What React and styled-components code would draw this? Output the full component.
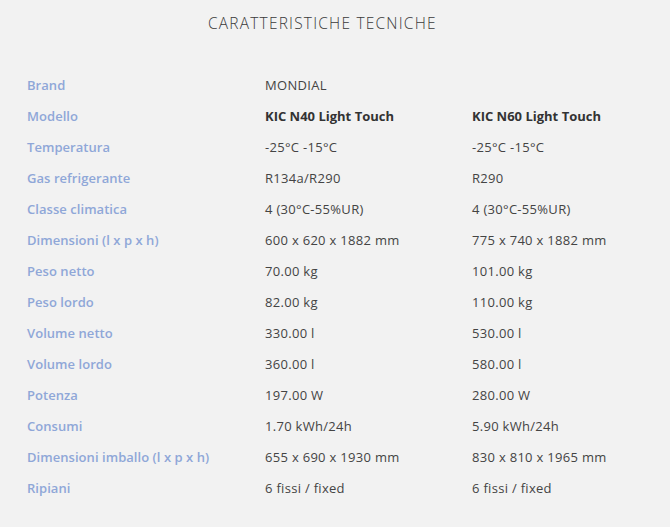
import React from "react";
import styled, { createGlobalStyle } from "styled-components";

const GlobalStyle = createGlobalStyle`
  html, body {
    margin: 0;
    padding: 0;
    background: #f2f2f2;
  }
  body {
    font-family: "Open Sans", "Liberation Sans", sans-serif;
  }
`;

const specs = [
  { label: "Brand", a: "MONDIAL", b: "" },
  { label: "Modello", a: "KIC N40 Light Touch", b: "KIC N60 Light Touch", bold: true },
  { label: "Temperatura", a: "-25°C -15°C", b: "-25°C -15°C" },
  { label: "Gas refrigerante", a: "R134a/R290", b: "R290" },
  { label: "Classe climatica", a: "4 (30°C-55%UR)", b: "4 (30°C-55%UR)" },
  { label: "Dimensioni (l x p x h)", a: "600 x 620 x 1882 mm", b: "775 x 740 x 1882 mm" },
  { label: "Peso netto", a: "70.00 kg", b: "101.00 kg" },
  { label: "Peso lordo", a: "82.00 kg", b: "110.00 kg" },
  { label: "Volume netto", a: "330.00 l", b: "530.00 l" },
  { label: "Volume lordo", a: "360.00 l", b: "580.00 l" },
  { label: "Potenza", a: "197.00 W", b: "280.00 W" },
  { label: "Consumi", a: "1.70 kWh/24h", b: "5.90 kWh/24h" },
  { label: "Dimensioni imballo (l x p x h)", a: "655 x 690 x 1930 mm", b: "830 x 810 x 1965 mm" },
  { label: "Ripiani", a: "6 fissi / fixed", b: "6 fissi / fixed" },
];

export default function App() {
  return (
    <Page>
      <GlobalStyle />
      <Title>CARATTERISTICHE TECNICHE</Title>
      <SpecTable>
        {specs.map((s) => (
          <Row key={s.label}>
            <Label>{s.label}</Label>
            <Value $bold={s.bold}>{s.a}</Value>
            <Value $bold={s.bold}>{s.b}</Value>
          </Row>
        ))}
      </SpecTable>
    </Page>
  );
}

const Page = styled.div`
  width: 670px;
  height: 527px;
  box-sizing: border-box;
`;

const Title = styled.h2`
  margin: 0;
  padding-top: 13px;
  height: 20px;
  line-height: 20px;
  padding-left: 208px;
  font-size: 15.5px;
  font-weight: 300;
  color: #3a3a3a;
  letter-spacing: 1.2px;
`;

const SpecTable = styled.div`
  margin-top: 36px;
  padding-left: 27px;
`;

const Row = styled.div`
  display: grid;
  grid-template-columns: 238px 207px 1fr;
  height: 31px;
  align-items: center;
`;

const Label = styled.div`
  font-size: 13px;
  font-weight: 600;
  color: #8fa7d8;
  letter-spacing: 0.05px;
`;

const Value = styled.div`
  font-size: 13px;
  font-weight: ${(p) => (p.$bold ? 700 : 400)};
  color: ${(p) => (p.$bold ? "#333" : "#444")};
  letter-spacing: ${(p) => (p.$bold ? "0" : "0.3px")};
`;
